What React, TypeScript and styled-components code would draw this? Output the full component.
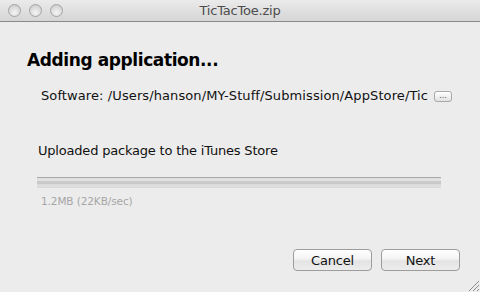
import React from 'react';
import styled, { createGlobalStyle } from 'styled-components';

const GlobalStyle = createGlobalStyle`
  html, body {
    margin: 0;
    padding: 0;
    background: #ececec;
  }
  body {
    font-family: 'DejaVu Sans', 'Liberation Sans', sans-serif;
  }
`;

const Window = styled.div`
  width: 480px;
  height: 292px;
  display: flex;
  flex-direction: column;
  background: #ececec;
  position: relative;
  overflow: hidden;
`;

const TitleBar = styled.div`
  height: 21px;
  border-bottom: 1px solid #8a8a8a;
  background: linear-gradient(#ebebeb, #d5d5d5);
  display: flex;
  align-items: center;
  position: relative;
`;

const Lights = styled.div`
  display: flex;
  gap: 8px;
  padding-left: 8px;
`;

const Light = styled.span`
  width: 13px;
  height: 13px;
  box-sizing: border-box;
  border-radius: 50%;
  border: 1px solid #a4a4a4;
  background: radial-gradient(circle at 50% 70%, #f4f4f4 0%, #dcdcdc 55%, #c4c4c4 100%);
`;

const Title = styled.div`
  position: absolute;
  left: 0;
  right: 0;
  text-align: center;
  font-size: 13px;
  color: #4d4d4d;
  letter-spacing: -0.2px;
`;

const Body = styled.div`
  flex: 1;
  display: flex;
  flex-direction: column;
  padding: 28px 20px 21px 27px;
`;

const Heading = styled.h1`
  margin: 0;
  font-size: 17px;
  line-height: 20px;
  font-weight: bold;
  color: #000;
  letter-spacing: -0.4px;
`;

const SoftwareRow = styled.div`
  margin-top: 18px;
  margin-left: 14px;
  display: flex;
  align-items: center;
  gap: 6px;
  font-size: 13px;
  line-height: 16px;
  color: #111;
  letter-spacing: 0.1px;
  white-space: nowrap;
`;

const BrowseButton = styled.span`
  width: 18px;
  height: 11px;
  box-sizing: border-box;
  border: 1px solid #a8a8a8;
  border-radius: 3px;
  background: linear-gradient(#ffffff, #e2e2e2);
  font-size: 8px;
  line-height: 8px;
  letter-spacing: 0;
  color: #555;
  text-align: center;
  margin-top: 1px;
`;

const Message = styled.div`
  margin-top: 39px;
  margin-left: 11px;
  font-size: 13px;
  line-height: 16px;
  color: #111;
  letter-spacing: -0.2px;
`;

const Progress = styled.div`
  margin-top: 18px;
  margin-left: 10px;
  width: 404px;
  height: 11px;
  box-sizing: border-box;
  border-top: 1px solid #a9a9a9;
  border-bottom: 1px solid #d9d9d9;
  background: linear-gradient(
    #dedede 0px,
    #e3e3e3 3px,
    #c9c9c9 3px,
    #c9c9c9 6px,
    #dbdbdb 6px,
    #dfdfdf 9px
  );
`;

const Status = styled.div`
  margin-top: 6px;
  margin-left: 14px;
  font-size: 10.5px;
  line-height: 14px;
  color: #a6a6a6;
  letter-spacing: -0.1px;
`;

const Footer = styled.div`
  margin-top: auto;
  display: flex;
  justify-content: flex-end;
  gap: 9px;
`;

const PushButton = styled.button`
  width: 79px;
  height: 22px;
  box-sizing: border-box;
  border: 1px solid #9c9c9c;
  border-radius: 4px;
  background: linear-gradient(#ffffff, #f3f3f3 45%, #e4e4e4 55%, #ececec);
  font-family: 'DejaVu Sans', sans-serif;
  font-size: 13px;
  color: #111;
  padding: 0;
  letter-spacing: -0.2px;
`;

const Grip = styled.svg`
  position: absolute;
  right: 1px;
  bottom: 1px;
`;

export default function App() {
  return (
    <>
      <GlobalStyle />
      <Window>
        <TitleBar>
          <Lights>
            <Light />
            <Light />
            <Light />
          </Lights>
          <Title>TicTacToe.zip</Title>
        </TitleBar>
        <Body>
          <Heading>Adding application...</Heading>
          <SoftwareRow>
            <span>Software: /Users/hanson/MY-Stuff/Submission/AppStore/Tic</span>
            <BrowseButton>...</BrowseButton>
          </SoftwareRow>
          <Message>Uploaded package to the iTunes Store</Message>
          <Progress />
          <Status>1.2MB (22KB/sec)</Status>
          <Footer>
            <PushButton>Cancel</PushButton>
            <PushButton>Next</PushButton>
          </Footer>
        </Body>
        <Grip width="11" height="11" viewBox="0 0 11 11">
          <g stroke="#8c8c8c" strokeWidth="1">
            <line x1="1" y1="11" x2="11" y2="1" />
            <line x1="5" y1="11" x2="11" y2="5" />
            <line x1="9" y1="11" x2="11" y2="9" />
          </g>
        </Grip>
      </Window>
    </>
  );
}
